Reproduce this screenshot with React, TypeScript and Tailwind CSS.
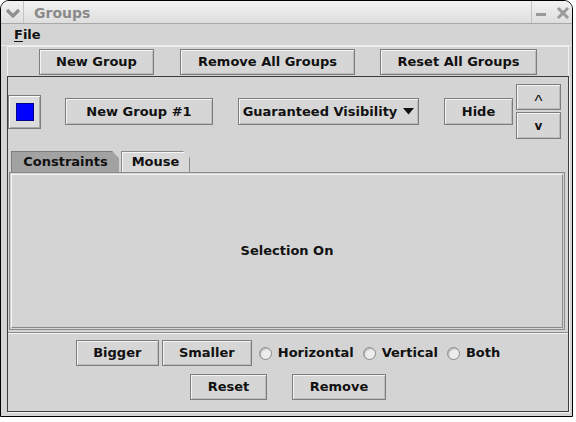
import React from 'react'

const font = { fontFamily: '"DejaVu Sans", "Liberation Sans", sans-serif' }

interface BtnProps {
  label: React.ReactNode;
  className?: string;
}

// metal-ish java button: grey outline with a light inner edge
const Btn: React.FC<BtnProps> = ({ label, className }) => (
  <div
    className={
      'flex items-center justify-center border border-[#7c7c7c] bg-[#d6d6d6] text-[13px] font-bold text-[#111] shadow-[inset_1px_1px_0_#f4f4f4,inset_-1px_-1px_0_#bcbcbc] ' +
      (className || '')
    }
  >
    {label}
  </div>
)

const Radio: React.FC<{ label: string }> = ({ label }) => (
  <div className="flex items-center gap-[6px] text-[13px] font-bold text-[#111]">
    <span className="h-[13px] w-[13px] rounded-full border border-[#8a8a8a] bg-[#ececec] shadow-[inset_1px_1px_1px_#b0b0b0]" />
    <span>{label}</span>
  </div>
)

export default function App() {
  return (
    <div className="h-[422px] w-[576px] overflow-hidden bg-white" style={font}>
      <div className="flex h-[417px] w-[573px] flex-col overflow-hidden rounded-t-[9px] border border-black bg-[#d4d4d4]">
        {/* title bar */}
        <div className="flex h-[23px] items-center border-b border-[#a8a8a8] bg-gradient-to-b from-[#f2f2f2] to-[#dedede]">
          <svg width="16" height="12" viewBox="0 0 16 12" className="ml-[4px] mt-[1px]">
            <path d="M2 3 L8 9 L14 3" stroke="#8f8f8f" strokeWidth="3.2" fill="none" />
          </svg>
          <div className="ml-[2px] h-full w-px bg-[#c4c4c4]" />
          <span className="ml-[10px] mt-[2px] text-[14px] font-bold text-[#8a8a8a]">Groups</span>
          <div className="flex-1" />
          <div className="h-full w-px bg-[#c4c4c4]" />
          <div className="ml-[4px] mt-[5px] h-[3px] w-[10px] bg-[#9a9a9a]" />
          <svg width="14" height="14" viewBox="0 0 14 14" className="ml-[10px] mr-[2px] mt-[1px]">
            <path d="M2 2 L12 12 M12 2 L2 12" stroke="#9a9a9a" strokeWidth="3" />
          </svg>
        </div>

        {/* menu bar */}
        <div className="flex h-[22px] items-center border-b border-[#ececec] pl-[13px]">
          <span className="mt-[1px] text-[13px] font-bold text-[#111]">
            <span className="underline underline-offset-2">F</span>ile
          </span>
        </div>

        {/* toolbar */}
        <div className="ml-[6px] mr-[3px] flex h-[30px] items-center border-x border-t border-[#f0f0f0] pl-[31px]">
          <Btn label="New Group" className="h-[26px] w-[115px]" />
          <Btn label="Remove All Groups" className="ml-[26px] h-[26px] w-[175px]" />
          <Btn label="Reset All Groups" className="ml-[25px] h-[26px] w-[157px]" />
        </div>

        {/* group panel */}
        <div className="ml-[6px] flex h-[336px] w-[562px] flex-col border border-[#3c3c3c] shadow-[1px_1px_0_#f4f4f4]">
          <div className="mt-[7px] flex h-[55px] items-center">
            <div className="flex h-[34px] w-[33px] items-center justify-center border border-[#7c7c7c] bg-[#dcdcdc] shadow-[inset_1px_1px_0_#fafafa,inset_-1px_-1px_0_#a8a8a8]">
              <div className="h-[18px] w-[18px] border border-[#00008a] bg-[#0000ff]" />
            </div>
            <Btn label="New Group #1" className="ml-[24px] h-[27px] w-[148px]" />
            <Btn
              label={
                <span className="flex items-center gap-[6px]">
                  Guaranteed Visibility
                  <svg width="11" height="7" viewBox="0 0 11 7">
                    <path d="M0 0 H11 L5.5 6.5 Z" fill="#111" />
                  </svg>
                </span>
              }
              className="ml-[25px] h-[27px] w-[181px]"
            />
            <Btn label="Hide" className="ml-[25px] h-[27px] w-[69px]" />
            <div className="ml-[3px] flex flex-col gap-[2px]">
              <Btn
                label={<span className="mt-[8px] text-[17px] font-normal leading-none" style={{ fontFamily: '"Liberation Sans", sans-serif' }}>^</span>}
                className="h-[26px] w-[45px]"
              />
              <Btn label={<span className="text-[12px]">v</span>} className="h-[27px] w-[45px]" />
            </div>
          </div>

          {/* tabs */}
          <div className="mt-[12px] flex h-[21px] items-end pl-[3px]">
            <div className="flex h-[21px] w-[108px] items-center justify-center border-l border-t border-[#7c7c7c] bg-[#a2a2a2] text-[13px] font-bold text-[#111] [clip-path:polygon(0_0,calc(100%-7px)_0,100%_7px,100%_100%,0_100%)]">
              Constraints
            </div>
            <div className="ml-[2px] flex h-[21px] w-[69px] items-center justify-center border-x border-t border-[#8a8a8a] bg-[#d8d8d8] text-[13px] font-bold text-[#111] shadow-[inset_1px_1px_0_#f6f6f6] [clip-path:polygon(0_0,calc(100%-7px)_0,100%_7px,100%_100%,0_100%)]">
              Mouse
            </div>
          </div>

          <div className="ml-[1px] h-[158px] w-[556px] border border-[#8a8a8a] p-px">
            <div className="flex h-full w-full items-center justify-center border border-b-[#8a8a8a] border-l-[#f4f4f4] border-r-[#8a8a8a] border-t-[#f4f4f4] text-[13px] font-bold text-[#111]">
              Selection On
            </div>
          </div>

          <div className="mt-[2px] h-[2px] border-b border-t border-b-[#f4f4f4] border-t-[#8a8a8a]" />

          <div className="mt-[6px] flex h-[26px] items-center justify-center">
            <Btn label="Bigger" className="h-[26px] w-[83px]" />
            <Btn label="Smaller" className="ml-[3px] h-[26px] w-[90px]" />
            <div className="ml-[7px] flex items-center gap-[9px]">
              <Radio label="Horizontal" />
              <Radio label="Vertical" />
              <Radio label="Both" />
            </div>
          </div>

          <div className="mt-[8px] flex h-[26px] items-center justify-center gap-[25px]">
            <Btn label="Reset" className="h-[26px] w-[77px]" />
            <Btn label="Remove" className="h-[26px] w-[94px]" />
          </div>
        </div>
      </div>
    </div>
  )
}
